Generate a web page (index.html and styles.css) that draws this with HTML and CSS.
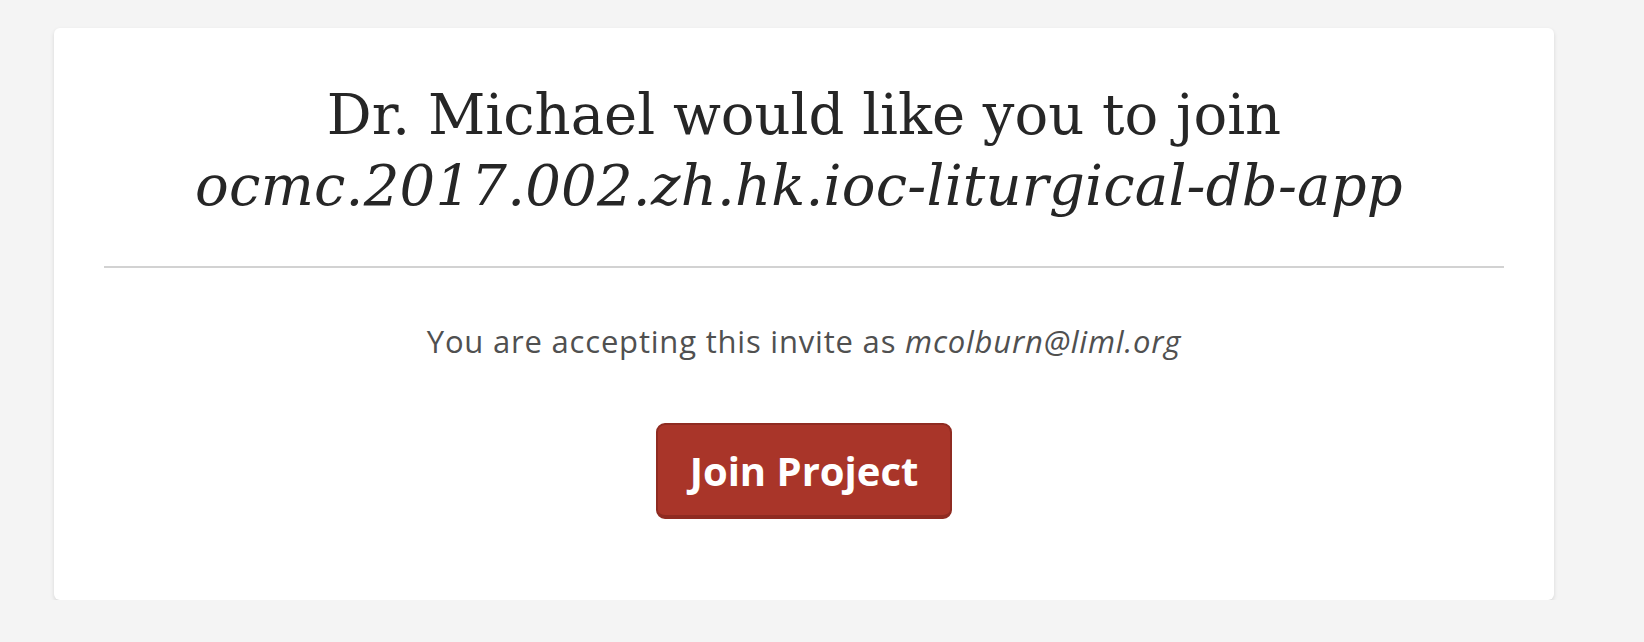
FILE: index.html
```html
<!DOCTYPE html>
<html lang="en">
<head>
<meta charset="utf-8">
<title>Join Project</title>
<link rel="stylesheet" href="styles.css">
</head>
<body>
<main class="page">
  <section class="card">
    <h1 class="title">Dr. Michael would like you to join<br><em>ocmc.2017.002.zh.hk.ioc-liturgical-db-app</em></h1>
    <hr class="divider">
    <p class="invite-as">You are accepting this invite as <em>mcolburn@liml.org</em></p>
    <div class="actions">
      <button class="btn-join" type="button">Join Project</button>
    </div>
  </section>
</main>
</body>
</html>
```
FILE: styles.css
```css
html, body {
  margin: 0;
  padding: 0;
  background: #f4f4f4;
}

.page {
  padding: 28px 0 0 54px;
}

.card {
  box-sizing: border-box;
  width: 1500px;
  height: 572px;
  background: #ffffff;
  border-radius: 6px;
  box-shadow: 0 2px 4px rgba(0, 0, 0, 0.12);
  padding: 51px 50px 80px;
  display: flex;
  flex-direction: column;
  align-items: stretch;
}

.title {
  margin: 0;
  font-family: "DejaVu Serif", "Liberation Serif", serif;
  font-weight: normal;
  font-size: 56px;
  line-height: 71px;
  color: #262626;
  text-align: center;
}

.title em {
  font-style: italic;
  letter-spacing: 0.25px;
  padding-right: 10px;
}

.divider {
  margin: 45px 0 0;
  border: 0;
  border-top: 2px solid #d2d2d2;
  height: 0;
}

.invite-as {
  margin: 52px 0 0;
  font-family: "Open Sans", sans-serif;
  font-size: 31px;
  letter-spacing: 0.8px;
  line-height: 43px;
  color: #505050;
  text-align: center;
}

.actions {
  margin-top: 60px;
  display: flex;
  justify-content: center;
}

.btn-join {
  box-sizing: border-box;
  height: 96px;
  padding: 0 32px;
  background: #a93529;
  color: #ffffff;
  font-family: "Open Sans", sans-serif;
  font-weight: bold;
  font-size: 40px;
  border: 2px solid #8f2b21;
  border-bottom-width: 4px;
  border-radius: 9px;
  cursor: pointer;
}
```
